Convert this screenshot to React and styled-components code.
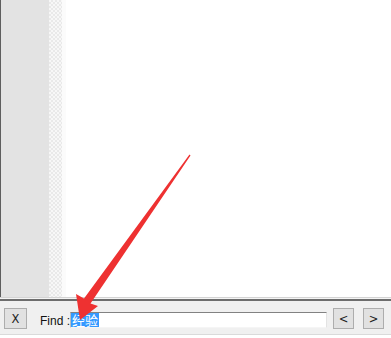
import React from "react";
import styled, { createGlobalStyle } from "styled-components";

const GlobalStyle = createGlobalStyle`
  html, body {
    margin: 0;
    padding: 0;
    background: #ffffff;
  }
  body {
    font-family: "Liberation Sans", Arial, sans-serif;
  }
`;

export default function App() {
  return (
    <>
      <GlobalStyle />
      <Window>
        <Editor>
          <Gutter />
          <FoldStrip />
          <TextArea />
        </Editor>
        <Divider />
        <FindBar>
          <BarButton width="21px">X</BarButton>
          <FindLabel>Find :</FindLabel>
          <SearchBox>
            <Selected>经验</Selected>
          </SearchBox>
          <NavGroup>
            <BarButton width="19px">&lt;</BarButton>
            <BarButton width="19px">&gt;</BarButton>
          </NavGroup>
        </FindBar>
        <Arrow viewBox="0 0 391 338" width="391" height="338">
          <polygon
            points="80,320 76,294 84,298.5 189.5,154.5 190.5,155.5 90.5,303.5 98,306"
            fill="#ee3131"
          />
        </Arrow>
      </Window>
    </>
  );
}

const Window = styled.div`
  position: relative;
  width: 391px;
  height: 338px;
  display: flex;
  flex-direction: column;
  overflow: hidden;
`;

const Editor = styled.div`
  display: flex;
  flex-shrink: 0;
  height: 297px;
  border-left: 1px solid #5e5e5e;
`;

const Gutter = styled.div`
  width: 48px;
  background: #e3e3e3;
`;

const FoldStrip = styled.div`
  width: 13px;
  background-color: #f7f7f7;
  background-image: repeating-conic-gradient(#e9e9e9 0 25%, #f7f7f7 0 50%);
  background-size: 4px 4px;
`;

const TextArea = styled.div`
  flex: 1;
  background: #ffffff;
  border-left: 4px solid #fbfbfb;
`;

const Divider = styled.div`
  flex-shrink: 0;
  height: 1px;
  background: #d4d4d4;
  border-bottom: 1px solid #f4f4f4;
  box-shadow: 0 2px 0 #6d6d6d;
  margin-bottom: 2px;
`;

const FindBar = styled.div`
  flex: 1;
  display: flex;
  align-items: flex-start;
  padding: 7px 7px 0 4px;
  background: #f0f0f0;
  border-bottom: 1px solid #dadada;
  margin-bottom: 3px;
`;

const BarButton = styled.div`
  width: ${(p) => p.width};
  height: 19px;
  flex-shrink: 0;
  box-sizing: content-box;
  border: 1px solid #adadad;
  background: #e1e1e1;
  display: flex;
  align-items: center;
  justify-content: center;
  font-family: "DejaVu Sans", sans-serif;
  font-size: 11.5px;
  color: #222222;
`;

const FindLabel = styled.span`
  margin: 6px 0 0 13px;
  font-size: 12px;
  line-height: 14px;
  color: #111111;
  white-space: nowrap;
`;

const SearchBox = styled.div`
  margin-top: 4px;
  flex: 1;
  height: 14px;
  background: #ffffff;
  border-top: 1px solid #828282;
  border-left: 1px solid #bdbdbd;
  border-right: 1px solid #e3e3e3;
  border-bottom: 1px solid #f5f5f5;
  padding: 0;
  display: flex;
  align-items: center;
`;

const Selected = styled.span`
  background: #3399ff;
  color: #ffffff;
  font-family: "Noto Sans CJK SC", sans-serif;
  font-size: 13px;
  line-height: 14px;
  height: 14px;
  padding: 0 1px;
`;

const NavGroup = styled.div`
  display: flex;
  flex-shrink: 0;
  gap: 9px;
  margin-left: 6px;
`;

const Arrow = styled.svg`
  position: absolute;
  left: 0;
  top: 0;
  pointer-events: none;
`;
